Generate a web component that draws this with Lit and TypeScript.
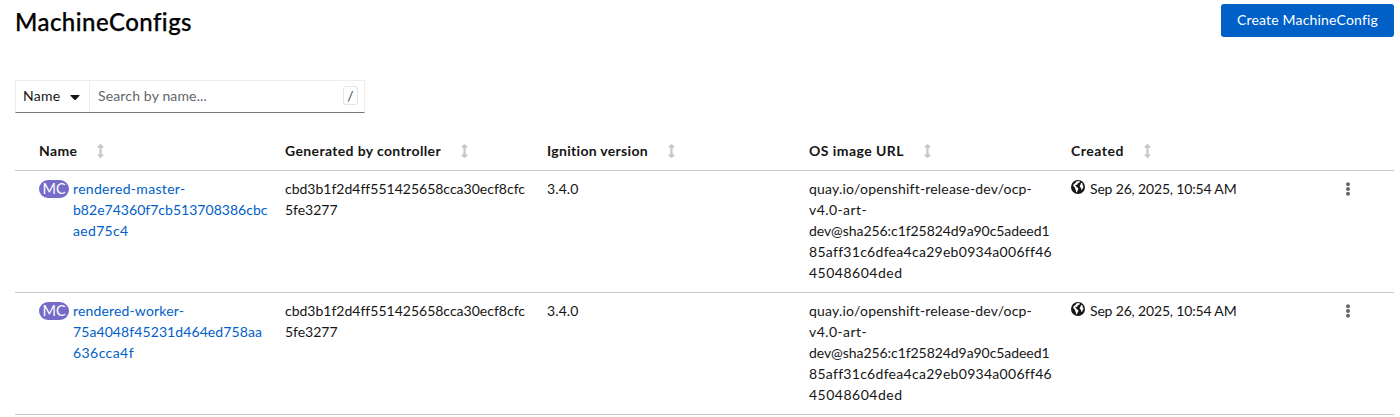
import { LitElement, html, css } from 'lit';

/** One line of text whose tracking is adjusted so that it spans `w` pixels. */
class TrackedLine extends LitElement {
  static properties = { text: {}, w: { type: Number } };
  declare text: string;
  declare w: number;
  static styles = css`
    :host { display: inline-block; white-space: pre; font-variant-ligatures: none; }
  `;
  render() {
    return html`<span>${this.text}</span>`;
  }
  updated() {
    this.fit();
    document.fonts.ready.then(() => this.fit());
  }
  fit() {
    const span = this.renderRoot.querySelector('span')!;
    span.style.letterSpacing = '0px';
    const natural = span.getBoundingClientRect().width;
    span.style.letterSpacing = `${(this.w - natural) / this.text.length}px`;
  }
}
customElements.define('tracked-line', TrackedLine);

type Line = [string, number];
interface Row { name: Line[]; controller: Line[]; ignition: Line; url: Line[]; created: Line }

const line = ([text, w]: Line) => html`<tracked-line .text=${text} .w=${w}></tracked-line>`;
const block = (lines: Line[]) => lines.map((l) => html`<div class="line">${line(l)}</div>`);

const columns: Line[] = [
  ['Name', 38.5],
  ['Generated by controller', 156],
  ['Ignition version', 101],
  ['OS image URL', 95],
  ['Created', 53],
];

const controller: Line[] = [['cbd3b1f2d4ff551425658cca30ecf8cfc', 240], ['5fe3277', 52.5]];
const url: Line[] = [
  ['quay.io/openshift-release-dev/ocp-', 223],
  ['v4.0-art-', 58],
  ['dev@sha256:c1f25824d9a90c5adeed1', 240.5],
  ['85aff31c6dfea4ca29eb0934a006ff46', 243],
  ['45048604ded', 93.5],
];
const created: Line = ['Sep 26, 2025, 10:54 AM', 146.5];

const rows: Row[] = [
  {
    name: [['rendered-master-', 112.5], ['b82e74360f7cb513708386cbc', 194.5], ['aed75c4', 55.5]],
    controller, ignition: ['3.4.0', 31.5], url, created,
  },
  {
    name: [['rendered-worker-', 111], ['75a4048f45231d464ed758aa', 189], ['636cca4f', 61]],
    controller, ignition: ['3.4.0', 31.5], url, created,
  },
];

const sortIcon = html`<svg class="sort" viewBox="0 0 256 512"><path fill="currentColor" d="M214.059 377.941H168V134.059h46.059c21.382 0 32.09-25.851 16.971-40.971L144.971 7.029c-9.373-9.373-24.568-9.373-33.941 0L24.971 93.088c-15.119 15.119-4.411 40.971 16.971 40.971H88v243.882H41.941c-21.382 0-32.09 25.851-16.971 40.971l86.059 86.059c9.373 9.373 24.568 9.373 33.941 0l86.059-86.059c15.12-15.119 4.412-40.971-16.97-40.971z"/></svg>`;

const globeIcon = html`<svg class="globe" viewBox="0 0 14 14"><circle cx="7" cy="7" r="7" fill="#151515"/><path fill="#fff" d="M5.400 1.500 7.400.9 9 1.600 8.300 2.700 7 3.100 6.600 4.300 5.300 5.100 4.600 4.800 4.200 5.600 5.200 6.300 5.700 7.200 6.800 7.700 7.500 8.700 6.800 10.200 6.200 11.600 5.700 12.600 5.100 12 4.900 10.400 4.200 9.100 4 7.700 2.700 6.500 2.200 5.200 2.800 3.900 4.200 3.300Z"/><path fill="#fff" d="M10.200 2.700 11.200 3.300 11.900 4.300 11.200 4.800 12.300 5.800 12.400 7.200 11.700 8 11.200 9.500 10.500 9.900 10.100 9 10 7.700 9 7.200 8.700 6.100 9.400 5 9.700 3.800Z"/></svg>`;

const kebabIcon = html`<svg class="kebab" viewBox="0 0 192 512"><path fill="currentColor" d="M96 184c39.8 0 72 32.2 72 72s-32.2 72-72 72-72-32.2-72-72 32.2-72 72-72zM24 80c0 39.8 32.2 72 72 72s72-32.2 72-72S135.800 8 96 8 24 40.200 24 80zm0 352c0 39.800 32.200 72 72 72s72-32.200 72-72-32.200-72-72-72-72 32.200-72 72z"/></svg>`;

class AppRoot extends LitElement {
  static styles = css`
    :host {
      display: block; box-sizing: border-box; height: 417px; overflow: hidden;
      background: #fff; color: #151515;
      font: 400 14px/21px Lato, "Noto Sans", sans-serif;
    }
    * { box-sizing: border-box; }
    header { display: flex; justify-content: space-between; height: 80px; padding: 4px 6px 0 15px; }
    h1 { margin: 1px 0 0; font-size: 24px; line-height: 33px; font-weight: 500; color: #000; height: 33px; -webkit-text-stroke: 0.25px #000; }
    button { font: inherit; border: 0; padding: 0; background: none; color: inherit; text-align: left; }
    .create { width: 173px; height: 33px; padding-bottom: 2px; border-radius: 3px; background: #0060c8; color: #fff; text-align: center; }
    .toolbar { display: flex; width: 350px; height: 33px; margin-left: 15px; border: 1px solid #ededed; border-bottom-color: #75787b; }
    .select { width: 74px; padding: 0 0 2px 7px; display: flex; align-items: center; gap: 9px; border-right: 1px solid #ededed; }
    .caret { width: 10px; height: 5px; margin-top: 3px; }
    .search { flex: 1; display: flex; align-items: center; justify-content: space-between; padding: 0 6px 2px 8px; color: #62666b; }
    .key { width: 15px; height: 19px; border: 1px solid #e4e4e4; border-radius: 3px; color: #3c3f42; text-align: center; line-height: 17px; }
    .table { margin: 20px 6px 0 15px; }
    .row { display: grid; grid-template-columns: 246px 262px 262px 262px 1fr 54px; padding: 7px 0 9px 24px; border-bottom: 1px solid #c9c9c9; height: 122px; }
    .head { height: 38px; font-weight: 700; }
    .cell { display: flex; }
    .line { height: 21px; }
    .sort { width: 7px; height: 14px; margin: 4px 0 0 19.5px; color: #c7c7c7; }
    .badge { width: 30px; height: 18px; margin: 2px 4px 0 0; border-radius: 9px; background: #766bc8; color: #fff; text-align: center; font-size: 14.5px; line-height: 17px; }
    .link { color: #0060c8; }
    .globe { width: 14px; height: 14px; margin: 2px 5px 0 0; }
    .kebab { width: 6px; height: 14px; margin: 4px 0 0 5px; color: #62666b; }
  `;

  render() {
    return html`
      <header>
        <h1>${line(['MachineConfigs', 177])}</h1>
        <button class="create">${line(['Create MachineConfig', 141])}</button>
      </header>
      <div class="toolbar">
        <button class="select">${line(['Name', 37.5])}<svg class="caret" viewBox="0 0 10 5"><path fill="#151515" d="M1 0H9Q10 .2 9.300 1L5.700 4.700Q5 5.200 4.300 4.700L.7 1Q0 .2 1 0Z"/></svg></button>
        <div class="search">${line(['Search by name...', 109])}<span class="key">/</span></div>
      </div>
      <div class="table">
        <div class="row head">${columns.map((c) => html`<div class="cell">${line(c)}${sortIcon}</div>`)}</div>
        ${rows.map((r) => html`
          <div class="row">
            <div class="cell"><span class="badge">${line(['MC', 23])}</span><div class="link">${block(r.name)}</div></div>
            <div>${block(r.controller)}</div>
            <div>${line(r.ignition)}</div>
            <div>${block(r.url)}</div>
            <div class="cell">${globeIcon}${line(r.created)}</div>
            <div>${kebabIcon}</div>
          </div>`)}
      </div>`;
  }
}
customElements.define('app-root', AppRoot);
